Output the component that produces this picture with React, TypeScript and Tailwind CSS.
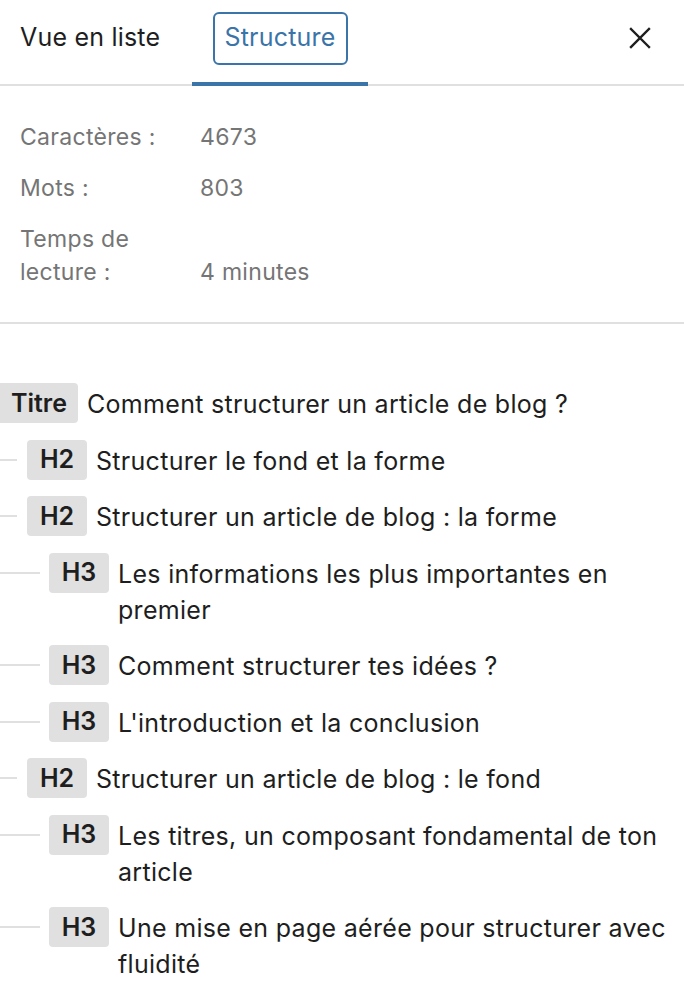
import React from 'react';

type Heading = { level: 1 | 2 | 3; text: string };

const headings: Heading[] = [
    { level: 1, text: 'Comment structurer un article de blog ?' },
    { level: 2, text: 'Structurer le fond et la forme' },
    { level: 2, text: 'Structurer un article de blog : la forme' },
    { level: 3, text: 'Les informations les plus importantes en premier' },
    { level: 3, text: 'Comment structurer tes idées ?' },
    { level: 3, text: "L'introduction et la conclusion" },
    { level: 2, text: 'Structurer un article de blog : le fond' },
    { level: 3, text: 'Les titres, un composant fondamental de ton article' },
    { level: 3, text: 'Une mise en page aérée pour structurer avec fluidité' },
];

const HeadingRow: React.FC<{ item: Heading }> = ({ item }) => {
    const label = item.level === 1 ? 'Titre' : `H${item.level}`;
    const indent = item.level === 1 ? 'pl-0' : item.level === 2 ? 'pl-[27px]' : 'pl-[49px]';
    return (
        <li className={`relative flex items-start py-[8.25px] ${indent}`}>
            {/* connector line */}
            {item.level === 2 && <span className="absolute left-0 top-[27px] h-[2px] w-[17px] bg-[#e0e0e0]" />}
            {item.level === 3 && <span className="absolute left-0 top-[27px] h-[2px] w-[40px] bg-[#e0e0e0]" />}
            <span
                className={`shrink-0 h-[40px] flex items-center justify-center rounded-[4px] bg-[#e0e0e0] text-[25px] font-semibold text-[#1e1e1e] ${
                    item.level === 1 ? 'w-[78px] rounded-l-none' : 'w-[60px]'
                }`}
            >
                {label}
            </span>
            <span className="ml-[9px] pr-[14px] pt-[3px] pb-[1px] text-[25px] leading-[36px] tracking-[0.3px] text-[#1e1e1e]">
                {item.text}
            </span>
        </li>
    );
};

export default function App() {
    return (
        <div className="w-[684px] h-[1002px] overflow-hidden bg-white font-['Inter',sans-serif]">
            {/* Header tabs */}
            <div className="relative flex h-[86px] items-stretch border-b-2 border-[#e0e0e0]">
                <button className="flex w-[192px] items-center pb-[8px] pl-[20px] text-left text-[25px] tracking-[0.2px] text-[#1e1e1e]">
                    Vue en liste
                </button>
                <div className="relative flex w-[176px] items-center justify-center pb-[8px]">
                    <span className="flex h-[53px] w-[135px] items-center justify-center rounded-[6px] border-2 border-[#3a74a8] text-[25px] tracking-[0.2px] text-[#3a74a8]">
                        Structure
                    </span>
                    <span className="absolute -bottom-[2px] left-0 right-0 h-[4px] bg-[#3a74a8]" />
                </div>
                <button className="absolute right-[31px] top-[25px] flex h-[26px] w-[26px] items-center justify-center text-[#1e1e1e]">
                    <svg width="22" height="22" viewBox="0 0 22 22" fill="none" stroke="currentColor" strokeWidth="2.4" strokeLinecap="square">
                        <path d="M2 2 L20 20 M20 2 L2 20" />
                    </svg>
                </button>
            </div>

            {/* Stats */}
            <div className="border-b-2 border-[#e0e0e0] px-[20px] pt-[35px] pb-[33px]">
                <dl className="grid grid-cols-[150px_1fr] items-end gap-x-[30px] gap-y-[18px] text-[23px] leading-[33px] tracking-[0.3px] text-[#757575]">
                    <dt>Caractères :</dt>
                    <dd>4673</dd>
                    <dt>Mots :</dt>
                    <dd>803</dd>
                    <dt className="w-[120px]">Temps de lecture :</dt>
                    <dd>4 minutes</dd>
                </dl>
            </div>

            {/* Outline */}
            <ul className="pt-[51px]">
                {headings.map((h, i) => (
                    <HeadingRow key={i} item={h} />
                ))}
            </ul>
        </div>
    );
}
